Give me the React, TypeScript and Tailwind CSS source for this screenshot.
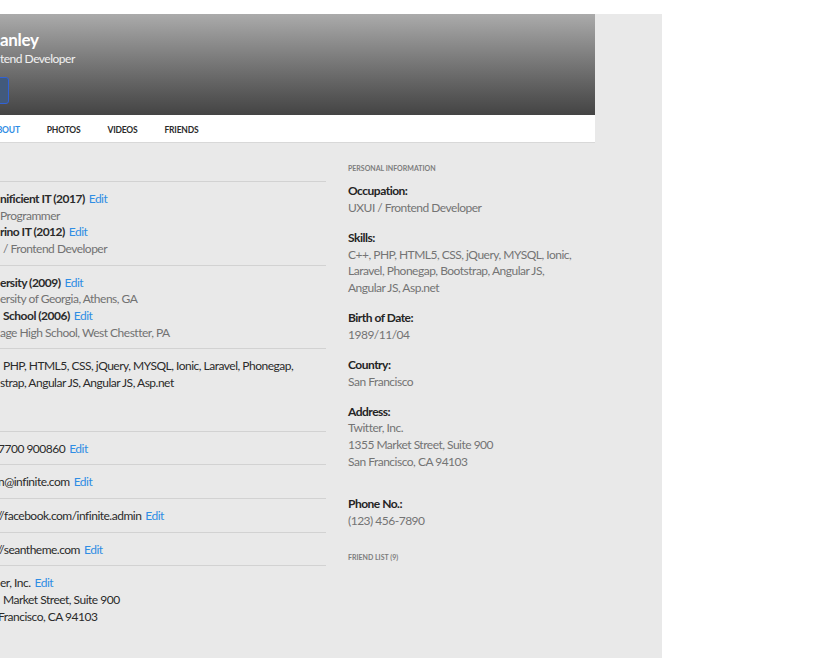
import type { ReactNode } from 'react';

const Edit = () => <span className="ml-1 font-normal text-[#2f8de4]">Edit</span>;

function Line({ children, tone = 'dark', bold = false, shift = '' }: { children: ReactNode; tone?: 'dark' | 'gray'; bold?: boolean; shift?: string }) {
  return (
    <div
      className={`whitespace-nowrap ${shift} ${bold ? 'font-bold' : ''} ${tone === 'gray' ? 'text-[#727272]' : 'text-[#2b2b2b]'}`}
    >
      {children}
    </div>
  );
}

function Row({ children, extra = false }: { children: ReactNode; extra?: boolean }) {
  return (
    <div className="border-t border-[#d2d2d2] pt-[9px] pb-[7px]">
      {children}
      {extra && <div className="h-[32px]" />}
    </div>
  );
}

function Field({ label, lines, className = 'mb-[13.5px]' }: { label: string; lines: string[]; className?: string }) {
  return (
    <div className={className}>
      <div className="font-bold text-[#242424]">{label}</div>
      {lines.map((l) => (
        <div key={l} className="text-[#747474]">
          {l}
        </div>
      ))}
    </div>
  );
}

export default function App() {
  return (
    <div className="min-h-screen bg-white pt-[14px] font-[Lato,sans-serif] text-[12px] leading-[16.67px] tracking-[-0.5px]">
      <div className="h-[644px] w-[662px] overflow-hidden bg-[#e9e9e9]">
        <div className="w-[595px]">
          {/* cover */}
          <div className="h-[101px] bg-gradient-to-b from-[#ababab] to-[#444444] pt-[15px]">
            <div className="text-[17px] font-bold leading-[22px] tracking-[-0.3px] text-white">anley</div>
            <div className="text-[12px] leading-[16px] text-white/90">tend Developer</div>
            <div className="-ml-[52px] mt-[10px] h-[27px] w-[61px] rounded-[3px] border border-[#3162d6] bg-[#425a7c]" />
          </div>

          {/* tabs */}
          <div className="flex h-[28px] items-center gap-[27px] border-b border-[#d8d8d8] bg-white pt-[3px] text-[8.5px] font-bold tracking-[-0.2px]">
            <span className="-ml-[9px] text-[#2f8de4]">ABOUT</span>
            <span className="text-[#2b2b2b]">PHOTOS</span>
            <span className="text-[#2b2b2b]">VIDEOS</span>
            <span className="text-[#2b2b2b]">FRIENDS</span>
          </div>

          <div className="flex">
            {/* left column */}
            <div className="w-[326px] pt-[38px]">
              <Row>
                <Line bold>nificient IT (2017)<Edit /></Line>
                <Line tone="gray">Programmer</Line>
                <Line bold>rino IT (2012)<Edit /></Line>
                <Line tone="gray" shift="ml-[3px]">/ Frontend Developer</Line>
              </Row>
              <Row>
                <Line bold>ersity (2009)<Edit /></Line>
                <Line tone="gray">ersity of Georgia, Athens, GA</Line>
                <Line bold shift="ml-[3px]">School (2006)<Edit /></Line>
                <Line tone="gray">age High School, West Chestter, PA</Line>
              </Row>
              <Row extra>
                <Line shift="ml-[3px]">PHP, HTML5, CSS, jQuery, MYSQL, Ionic, Laravel, Phonegap,</Line>
                <Line>strap, Angular JS, Angular JS, Asp.net</Line>
              </Row>
              <Row>
                <Line shift="-ml-[2px]">7700 900860<Edit /></Line>
              </Row>
              <Row>
                <Line shift="-ml-[2px]">n@infinite.com<Edit /></Line>
              </Row>
              <Row>
                <Line shift="-ml-[3px]">//facebook.com/infinite.admin<Edit /></Line>
              </Row>
              <Row>
                <Line shift="-ml-[3px]">//seantheme.com<Edit /></Line>
              </Row>
              <Row>
                <Line>er, Inc.<Edit /></Line>
                <Line shift="ml-[3px]">Market Street, Suite 900</Line>
                <Line shift="-ml-[2px]">Francisco, CA 94103</Line>
              </Row>
            </div>

            {/* right column */}
            <div className="ml-[22px] w-[247px] pt-[20px]">
              <div className="mb-[10px] text-[7px] font-bold uppercase leading-[10px] tracking-normal text-[#7d7d7d]">
                Personal Information
              </div>
              <Field label="Occupation:" lines={['UXUI / Frontend Developer']} />
              <Field
                label="Skills:"
                lines={['C++, PHP, HTML5, CSS, jQuery, MYSQL, Ionic,', 'Laravel, Phonegap, Bootstrap, Angular JS,', 'Angular JS, Asp.net']}
              />
              <Field label="Birth of Date:" lines={['1989/11/04']} />
              <Field label="Country:" lines={['San Francisco']} />
              <Field
                label="Address:"
                lines={['Twitter, Inc.', '1355 Market Street, Suite 900', 'San Francisco, CA 94103']}
                className="mb-[26px]"
              />
              <Field label="Phone No.:" lines={['(123) 456-7890']} className="mb-[22px]" />
              <div className="text-[7px] font-bold uppercase leading-[10px] tracking-normal text-[#7d7d7d]">Friend List (9)</div>
            </div>
          </div>
        </div>
      </div>
    </div>
  );
}
